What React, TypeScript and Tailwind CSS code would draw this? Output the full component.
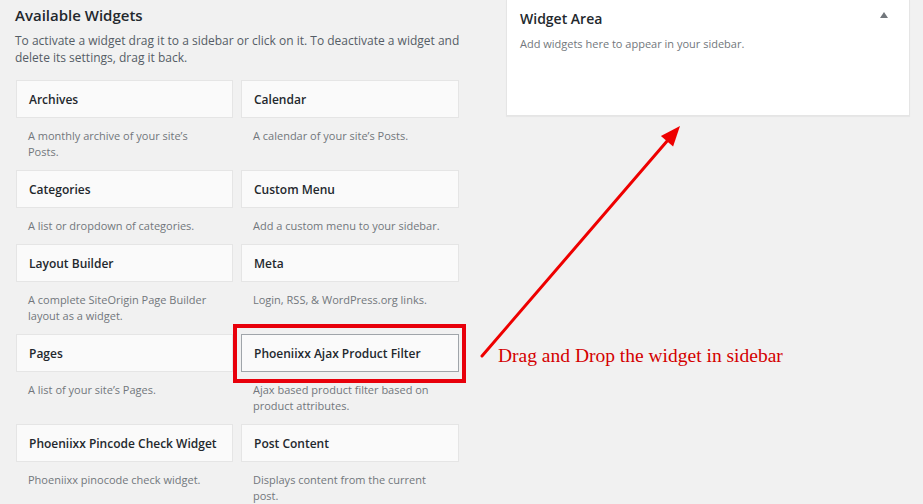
import React from "react";

type W = { name: string; desc: string; hl?: boolean };

const widgets: W[] = [
  { name: "Archives", desc: "A monthly archive of your site’s Posts." },
  { name: "Calendar", desc: "A calendar of your site’s Posts." },
  { name: "Categories", desc: "A list or dropdown of categories." },
  { name: "Custom Menu", desc: "Add a custom menu to your sidebar." },
  { name: "Layout Builder", desc: "A complete SiteOrigin Page Builder layout as a widget." },
  { name: "Meta", desc: "Login, RSS, & WordPress.org links." },
  { name: "Pages", desc: "A list of your site’s Pages." },
  { name: "Phoeniixx Ajax Product Filter", desc: "Ajax based product filter based on product attributes.", hl: true },
  { name: "Phoeniixx Pincode Check Widget", desc: "Phoeniixx pinocode check widget." },
  { name: "Post Content", desc: "Displays content from the current post." },
];

function Widget({ w }: { w: W }) {
  return (
    <div className="relative">
      <div
        className={
          "h-[38px] flex items-center pl-[12px] pt-[1px] bg-[#fafafa] border text-[12px] font-semibold text-[#23282d] " +
          (w.hl ? "border-[#a0a5aa]" : "border-[#e5e5e5]")
        }
      >
        {w.name}
      </div>
      <div className="pt-[10px] pb-[10px] pl-[12px] pr-[14px] text-[11px] leading-[16px] text-[#72777c]">{w.desc}</div>
      {w.hl && (
        <div className="absolute left-[-8px] right-[-7px] top-[-10px] h-[59px] border-[4px] border-[#e8000b] pointer-events-none" />
      )}
    </div>
  );
}

export default function App() {
  return (
    <div
      className="relative w-[923px] h-[504px] overflow-hidden bg-[#f1f1f1] flex"
      style={{ fontFamily: '"Open Sans", sans-serif' }}
    >
      <div className="w-[470px] pl-[15px] pt-[4px]">
        <h2 className="text-[15px] font-semibold text-[#23282d] leading-[22px]">Available Widgets</h2>
        <p className="mt-[6px] text-[12px] leading-[17px] text-[#555d66] pr-[4px]">
          To activate a widget drag it to a sidebar or click on it. To deactivate a widget and delete its settings, drag it back.
        </p>
        <div className="mt-[14px] ml-[1px] grid grid-cols-[217px_218px] gap-x-[8px]">
          {widgets.map((w) => (
            <Widget key={w.name} w={w} />
          ))}
        </div>
      </div>
      <div className="ml-[36px] w-[404px]">
        <div className="h-[116px] bg-white border-x border-b border-[#e5e5e5] shadow-[0_1px_1px_rgba(0,0,0,0.04)] pl-[13px] pr-[21px] pt-[8px] relative">
          <div className="flex items-center justify-between">
            <h3 className="text-[14px] font-semibold text-[#23282d] leading-[22px]">Widget Area</h3>
            <svg width="8" height="6" viewBox="0 0 8 6" className="mt-[-8px]">
              <polygon points="4,0 8,6 0,6" fill="#72777c" />
            </svg>
          </div>
          <p className="mt-[6px] text-[11px] leading-[16px] text-[#72777c]">Add widgets here to appear in your sidebar.</p>
        </div>
      </div>

      <svg className="absolute inset-0 pointer-events-none" width="923" height="504" viewBox="0 0 923 504">
        <line x1="482" y1="356" x2="668" y2="140" stroke="#ee0000" strokeWidth="3" strokeLinecap="round" />
        <polygon points="680,126 673.1,146.4 660.9,136" fill="#ee0000" />
      </svg>
      <div
        className="absolute left-[498px] top-[344px] text-[19.5px] leading-[24px] text-[#d40000]"
        style={{ fontFamily: '"Liberation Serif", serif' }}
      >
        Drag and Drop the widget in sidebar
      </div>
    </div>
  );
}
